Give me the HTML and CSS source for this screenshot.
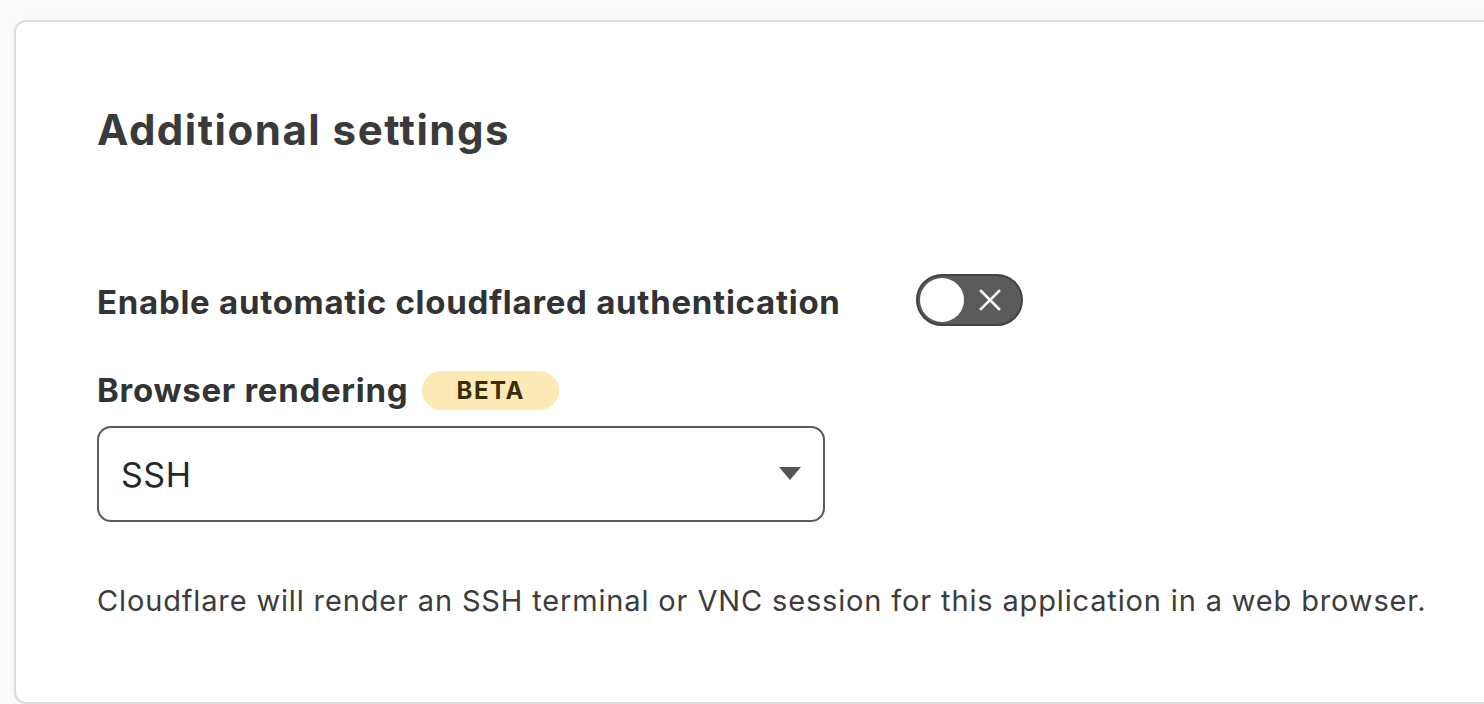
FILE: index.html
```html
<!DOCTYPE html>
<html lang="en">
<head>
<meta charset="utf-8">
<title>Additional settings</title>
<link rel="stylesheet" href="styles.css">
</head>
<body>
<section class="card">
  <h2 class="card-title">Additional settings</h2>
  <div class="row toggle-row">
    <span class="label label-offset">Enable automatic cloudflared authentication</span>
    <button class="toggle" type="button" aria-pressed="false">
      <span class="knob"></span>
      <svg class="toggle-x" viewBox="0 0 22 22" width="22" height="22"><path d="M2 2 L20 20 M20 2 L2 20" stroke="#fff" stroke-width="2.6" stroke-linecap="square" fill="none"/></svg>
    </button>
  </div>
  <div class="row label-row">
    <span class="label">Browser rendering</span>
    <span class="badge">BETA</span>
  </div>
  <div class="select">
    <span class="select-value">SSH</span>
    <svg class="caret" viewBox="0 0 22 14" width="22" height="14"><path d="M0 0 H22 L11 13 Z" fill="#555"/></svg>
  </div>
  <p class="desc">Cloudflare will render an SSH terminal or VNC session for this application in a web browser.</p>
</section>
</body>
</html>
```
FILE: styles.css
```css
html, body {
  margin: 0;
  padding: 0;
  background: #fbfbfb;
  overflow: hidden;
}
body {
  font-family: Inter, "Noto Sans", "Liberation Sans", sans-serif;
  color: #363636;
  height: 704px;
}
.card {
  box-sizing: border-box;
  margin: 20px 0 0 14px;
  width: 1520px;
  height: 684px;
  background: #fff;
  border: 2px solid #dcdcdc;
  border-radius: 12px;
  box-shadow: 0 0 10px rgba(0,0,0,0.04);
  padding: 84px 0 0 81px;
}
.card-title {
  margin: 0;
  font-size: 42px;
  font-weight: 700;
  line-height: 48px;
  color: #3a3a3a;
  letter-spacing: 1.5px;
}
.row {
  display: flex;
  align-items: center;
}
.toggle-row {
  margin-top: 120px;
  gap: 75px;
}
.label {
  font-size: 33px;
  font-weight: 700;
  line-height: 40px;
  color: #333;
  letter-spacing: 0.72px;
}
.label-offset {
  margin-top: 4px;
}
.toggle {
  position: relative;
  box-sizing: border-box;
  width: 107px;
  height: 52px;
  border-radius: 26px;
  background: #5b5b5b;
  border: 2px solid #424242;
  padding: 0 20px 0 0;
  display: flex;
  align-items: center;
  justify-content: flex-end;
  cursor: pointer;
}
.knob {
  position: absolute;
  left: 2px;
  top: 2px;
  width: 44px;
  height: 44px;
  border-radius: 50%;
  background: #fff;
}
.toggle-x {
  display: block;
}
.label-row {
  margin-top: 44px;
  gap: 14px;
}
.badge {
  display: inline-flex;
  align-items: center;
  justify-content: center;
  width: 137px;
  height: 39px;
  border-radius: 20px;
  background: #fde9b6;
  color: #3b2c0a;
  font-size: 24px;
  font-weight: 700;
  letter-spacing: 1.6px;
}
.select {
  box-sizing: border-box;
  margin-top: 16px;
  width: 728px;
  height: 96px;
  border: 2px solid #5a5a5a;
  border-radius: 14px;
  display: flex;
  align-items: center;
  justify-content: space-between;
  padding: 0 22px 0 22px;
}
.select-value {
  font-size: 34px;
  color: #262626;
  letter-spacing: 0.5px;
}
.desc {
  margin: 61px 0 0;
  font-size: 29px;
  line-height: 36px;
  color: #3c3c3c;
  letter-spacing: 0.85px;
}
```
